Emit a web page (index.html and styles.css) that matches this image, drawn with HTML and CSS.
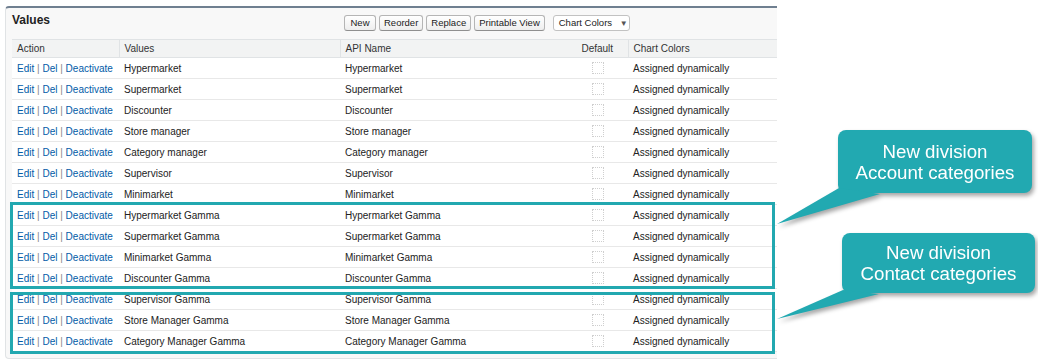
FILE: index.html
```html
<!DOCTYPE html>
<html lang="en">
<head>
  <meta charset="UTF-8" />
  <meta name="viewport" content="width=device-width, initial-scale=1.0" />
  <title>Values</title>
  <link rel="stylesheet" href="styles.css">
</head>
<body>
  <div class="page">
    <div class="panel">
      <div class="panel-head">
        <h3>Values</h3>
        <div class="buttons">
          <button class="btn btn-new">New</button>
          <button class="btn">Reorder</button>
          <button class="btn">Replace</button>
          <button class="btn">Printable View</button>
          <button class="btn menu">Chart Colors <span class="arrow">&#9660;</span></button>
        </div>
      </div>
      <table class="values">
        <colgroup>
          <col class="c-action">
          <col class="c-values">
          <col class="c-api">
          <col class="c-default">
          <col class="c-colors">
        </colgroup>
        <thead>
          <tr>
            <th>Action</th>
            <th>Values</th>
            <th>API Name</th>
            <th class="center">Default</th>
            <th class="sep">Chart Colors</th>
          </tr>
        </thead>
        <tbody id="rows"></tbody>
      </table>
    </div>

    <div class="mark mark-account"></div>
    <div class="mark mark-contact"></div>

    <div class="callout callout-account">
      <svg class="tail" width="120" height="100" viewBox="0 0 120 100">
        <polygon points="62,58 103,64 0,94" />
      </svg>
      <div class="callout-text">New division<br>Account categories</div>
    </div>
    <div class="callout callout-contact">
      <svg class="tail" width="120" height="100" viewBox="0 0 120 100">
        <polygon points="66,57 102,61 0,86" />
      </svg>
      <div class="callout-text">New division<br>Contact categories</div>
    </div>
  </div>

  <script>
    const values = [
      'Hypermarket', 'Supermarket', 'Discounter', 'Store manager', 'Category manager',
      'Supervisor', 'Minimarket', 'Hypermarket Gamma', 'Supermarket Gamma',
      'Minimarket Gamma', 'Discounter Gamma', 'Supervisor Gamma',
      'Store Manager Gamma', 'Category Manager Gamma'
    ];

    const tbody = document.getElementById('rows');
    values.forEach(value => {
      const row = document.createElement('tr');
      row.innerHTML = `
        <td><a href="#">Edit</a> <span class="bar">|</span> <a href="#">Del</a> <span class="bar">|</span> <a href="#">Deactivate</a></td>
        <td>${value}</td>
        <td>${value}</td>
        <td class="center"><span class="check"></span></td>
        <td>Assigned dynamically</td>
      `;
      tbody.appendChild(row);
    });
  </script>
</body>
</html>
```

FILE: styles.css
```css
body {
  margin: 0;
  background: #fff;
  font-family: "Liberation Sans", Arial, sans-serif;
  font-size: 10px;
  color: #222;
}
.page {
  position: relative;
  width: 1038px;
  height: 360px;
  overflow: hidden;
}
.panel {
  margin: 6px 0 0 5px;
  width: 772px;
  box-sizing: border-box;
  background: #f8f8f8;
  border-top: 2px solid #6f7f90;
  border-left: 1px solid #e0e3e5;
  border-bottom: 1px solid #e0e3e5;
  border-radius: 4px 0 0 4px;
  padding: 0 0 6px 6px;
}
.panel-head {
  height: 31px;
  display: flex;
  align-items: center;
}
.panel-head h3 {
  margin: -8px 0 0 0;
  width: 332px;
  font-size: 12px;
  font-weight: bold;
  color: #222;
}
.buttons {
  display: flex;
  gap: 3px;
  margin-top: -2px;
}
.btn {
  font-family: "Liberation Sans", Arial, sans-serif;
  font-size: 9.5px;
  color: #222;
  height: 16px;
  padding: 0 4px;
  white-space: nowrap;
  background: linear-gradient(#ffffff, #eeeeee);
  border: 1px solid #b5b5b5;
  border-bottom-color: #8f8f8f;
  border-radius: 3px;
}
.btn-new {
  min-width: 32px;
}
.btn.menu {
  margin-left: 5px;
  width: 77px;
  text-align: left;
  padding: 0 4px 0 5px;
  background: #fff;
  border-color: #c2c2c2;
}
.arrow {
  font-size: 8px;
  margin-left: 5px;
  color: #555;
}
.values {
  width: 765px;
  border-collapse: collapse;
  table-layout: fixed;
  background: #fff;
}
.c-action { width: 107px; }
.c-values { width: 221px; }
.c-api { width: 227px; }
.c-default { width: 61px; }
.c-colors { width: 149px; }
.values th {
  height: 17px;
  padding: 0 5px;
  background: #f2f3f3;
  border-top: 1px solid #e0e3e5;
  border-bottom: 1px solid #e0e3e5;
  border-left: 1px solid #e0e3e5;
  text-align: left;
  font-weight: normal;
  color: #333;
}
.values th:first-child,
.values th.center {
  border-left: none;
}
.values td {
  height: 20px;
  padding: 0 5px;
  border-bottom: 1px solid #e8e8e8;
  white-space: nowrap;
  overflow: hidden;
  color: #222;
}
.values .center {
  text-align: center;
}
.values a {
  color: #015ba7;
  text-decoration: none;
}
.bar {
  color: #888;
}
.check {
  display: inline-block;
  width: 10px;
  height: 10px;
  border: 1px dotted #cfcfcf;
  vertical-align: middle;
}
.mark {
  position: absolute;
  left: 10px;
  width: 765px;
  box-sizing: border-box;
  border: 3px solid #22a8b0;
}
.mark-account {
  top: 202px;
  height: 87px;
}
.mark-contact {
  top: 292px;
  height: 62px;
}
.callout {
  position: absolute;
  display: flex;
  align-items: center;
  justify-content: center;
  background: #22a9b1;
  border-radius: 8px;
  color: #fff;
  font-size: 18.7px;
  line-height: 21px;
  text-align: center;
  filter: drop-shadow(2px 3px 2px rgba(0, 0, 0, 0.35));
}
.callout-account {
  left: 838px;
  top: 130px;
  width: 194px;
  height: 63px;
}
.callout-contact {
  left: 842px;
  top: 233px;
  width: 193px;
  height: 60px;
}
.tail {
  position: absolute;
  left: -61px;
  top: 0;
  overflow: visible;
}
.callout-contact .tail {
  left: -65px;
}
.tail polygon {
  fill: #22a9b1;
}
.callout-text {
  position: relative;
}
```
